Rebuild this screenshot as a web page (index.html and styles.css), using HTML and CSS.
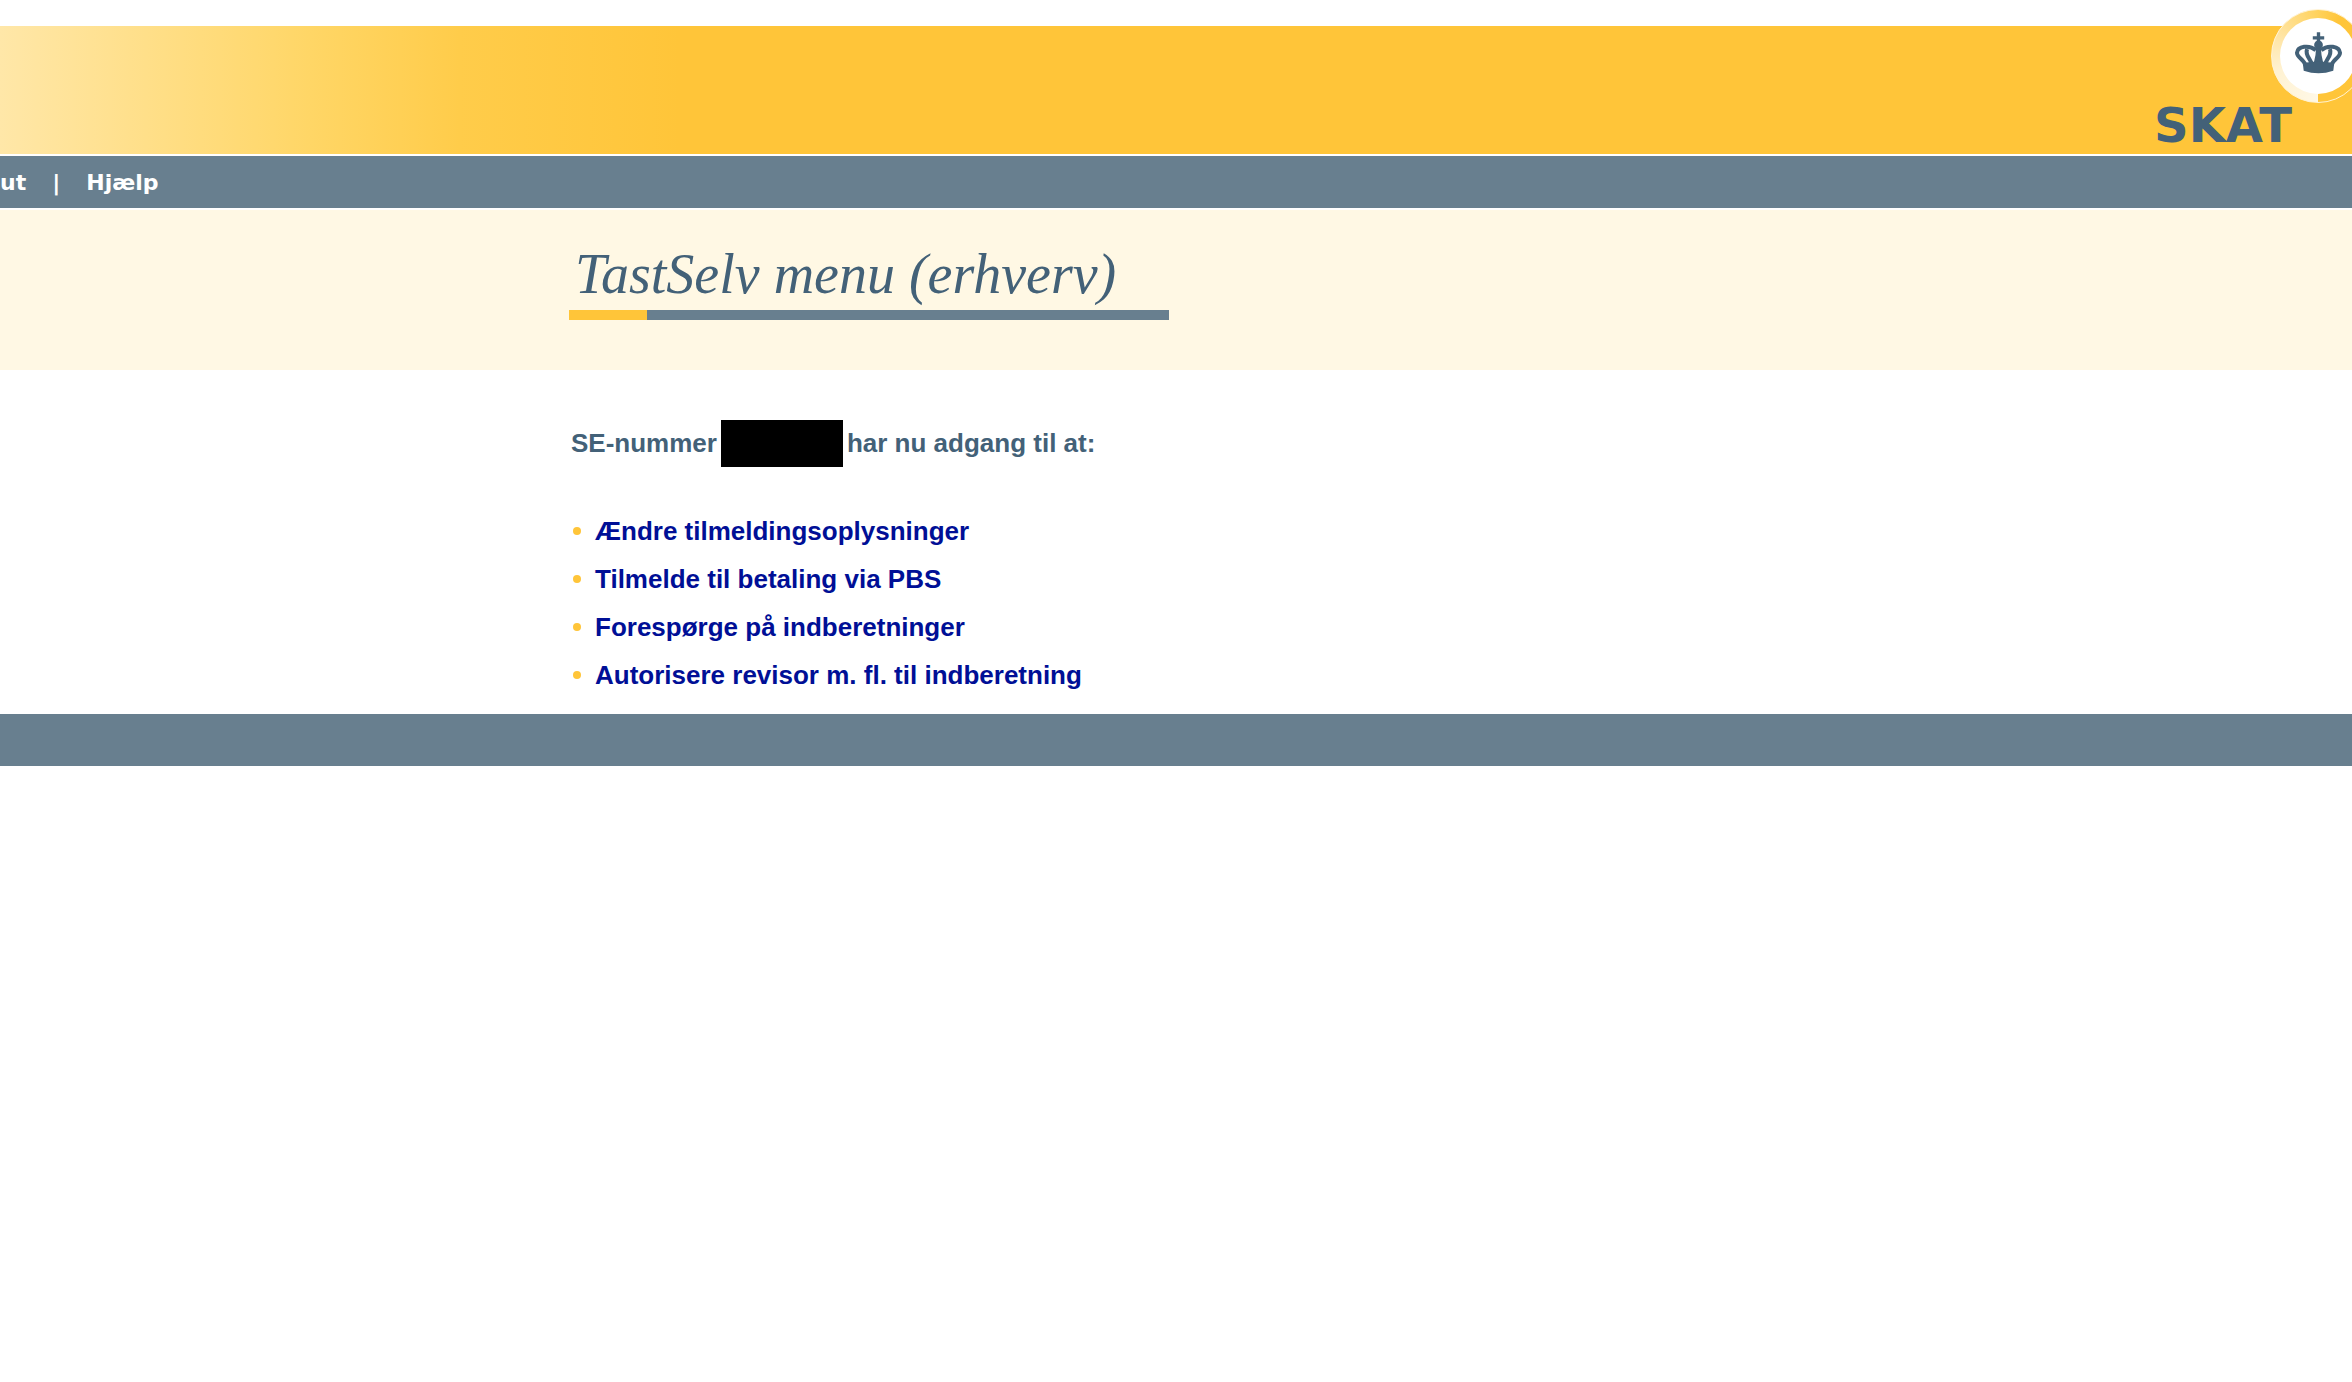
FILE: index.html
```html
<!DOCTYPE html>
<html lang="da">
<head>
  <meta charset="UTF-8" />
  <title>TastSelv menu (erhverv)</title>
  <link rel="stylesheet" href="styles.css">
</head>
<body>
  <header class="banner">
    <span class="logo-text">SKAT</span>
    <div class="emblem">
      <div class="emblem-inner">
        <svg class="crown" viewBox="0 0 140 124" aria-hidden="true">
          <!-- cross and orb -->
          <path d="M65 0h10v12h12v10H75v8H65v-8H53V12h12z" />
          <circle cx="70" cy="38" r="13" />
          <path d="M63 44h14l2 24 6 28H55l6-28z" />
          <!-- arches -->
          <g class="crown-arches">
            <path d="M31 100C30 82 5 76 6 61C8 42 42 36 62 54" />
            <path d="M109 100C110 82 135 76 134 61C132 42 98 36 78 54" />
            <path d="M50 98C50 80 28 72 36 50" />
            <path d="M90 98C90 80 112 72 104 50" />
          </g>
          <!-- base -->
          <path d="M23 92Q70 82 117 92L114 115Q70 130 26 115Z" />
        </svg>
      </div>
    </div>
  </header>

  <nav class="navbar">
    <a class="navbar-link" href="#">ut</a>
    <span class="navbar-sep">|</span>
    <a class="navbar-link" href="#">Hjælp</a>
  </nav>

  <div class="title-area">
    <h1>TastSelv menu (erhverv)</h1>
  </div>

  <main class="content">
    <p class="intro">SE-nummer <span class="hidden-number"></span> har nu adgang til at:</p>
    <ul class="menu">
      <li><a href="#">Ændre tilmeldingsoplysninger</a></li>
      <li><a href="#">Tilmelde til betaling via PBS</a></li>
      <li><a href="#">Forespørge på indberetninger</a></li>
      <li><a href="#">Autorisere revisor m. fl. til indberetning</a></li>
    </ul>
  </main>

  <footer class="footer"></footer>
</body>
</html>
```
FILE: styles.css
```css
body {
  margin: 0;
  background: #fff;
  font-family: "Liberation Sans", Arial, sans-serif;
}
/* Banner */
.banner {
  position: relative;
  display: flex;
  justify-content: flex-end;
  align-items: flex-end;
  box-sizing: border-box;
  height: 154px;
  padding-right: 60px;
  overflow: hidden;
  background: linear-gradient(90deg, #ffe7a8 0, #ffd666 310px, #ffcc4a 460px, #ffc539 680px) 0 26px no-repeat;
}
.logo-text {
  font-family: "DejaVu Sans", Verdana, sans-serif;
  font-size: 48px;
  font-weight: 700;
  line-height: 58px;
  color: #436178;
}
.emblem {
  position: absolute;
  top: 9px;
  right: -13px;
  display: flex;
  align-items: center;
  justify-content: center;
  width: 92px;
  height: 92px;
  border: 1px solid #fff3d4;
  border-radius: 50%;
  background: conic-gradient(#ffd25c 0deg, #ffc539 30deg, #ffc539 180deg, #fff8e6 180deg, #fff2d2 250deg, #ffe4a2 300deg, #ffd25c 360deg);
}
.emblem-inner {
  display: flex;
  align-items: center;
  justify-content: center;
  width: 76px;
  height: 76px;
  border-radius: 50%;
  background: #fff;
}
.crown {
  width: 47px;
  height: 42px;
  margin-bottom: 6px;
  fill: #436178;
}
.crown-arches {
  fill: none;
  stroke: #436178;
  stroke-width: 12;
}
/* Navbar */
.navbar {
  display: flex;
  align-items: center;
  gap: 26px;
  height: 52px;
  margin: 2px 0;
  background: #687f8f;
  color: #fff;
  font-family: "DejaVu Sans", Verdana, sans-serif;
  font-size: 22px;
  font-weight: 700;
}
.navbar-link {
  color: #fff;
  text-decoration: none;
}
/* Page title */
.title-area {
  height: 160px;
  padding-left: 569px;
  background: #fff8e4;
}
h1 {
  box-sizing: border-box;
  width: 600px;
  height: 110px;
  margin: 0;
  padding: 30px 0 0 6px;
  background: linear-gradient(90deg, #ffc539 78px, #687f8f 78px) 0 100% / 100% 10px no-repeat;
  color: #436178;
  font-family: "Liberation Serif", "Times New Roman", serif;
  font-size: 56px;
  font-style: italic;
  font-weight: 400;
  line-height: 68px;
}
/* Content */
.content {
  padding: 50px 0 15px 571px;
  font-size: 26px;
  font-weight: 700;
}
.intro {
  display: flex;
  align-items: center;
  gap: 4px;
  margin: 0 0 40px;
  color: #436178;
}
.hidden-number {
  width: 122px;
  height: 47px;
  background: #000;
}
.menu {
  margin: 0;
  padding: 0;
  list-style: none;
}
.menu li {
  display: flex;
  align-items: center;
  gap: 14px;
  height: 48px;
}
.menu li::before {
  content: "";
  width: 8px;
  height: 8px;
  margin-left: 2px;
  border-radius: 50%;
  background: #ffc539;
}
.menu a {
  color: #000f96;
  text-decoration: none;
}
.footer {
  height: 52px;
  background: #687f8f;
}
```
